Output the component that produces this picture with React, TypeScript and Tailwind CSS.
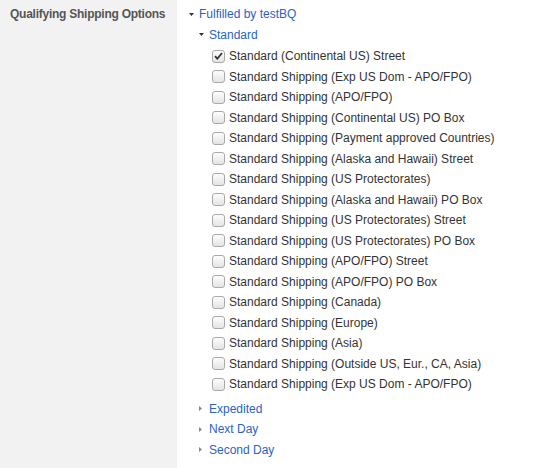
const standardOptions = [
  { label: 'Standard (Continental US) Street', checked: true },
  { label: 'Standard Shipping (Exp US Dom - APO/FPO)' },
  { label: 'Standard Shipping (APO/FPO)' },
  { label: 'Standard Shipping (Continental US) PO Box' },
  { label: 'Standard Shipping (Payment approved Countries)' },
  { label: 'Standard Shipping (Alaska and Hawaii) Street' },
  { label: 'Standard Shipping (US Protectorates)' },
  { label: 'Standard Shipping (Alaska and Hawaii) PO Box' },
  { label: 'Standard Shipping (US Protectorates) Street' },
  { label: 'Standard Shipping (US Protectorates) PO Box' },
  { label: 'Standard Shipping (APO/FPO) Street' },
  { label: 'Standard Shipping (APO/FPO) PO Box' },
  { label: 'Standard Shipping (Canada)' },
  { label: 'Standard Shipping (Europe)' },
  { label: 'Standard Shipping (Asia)' },
  { label: 'Standard Shipping (Outside US, Eur., CA, Asia)' },
  { label: 'Standard Shipping (Exp US Dom - APO/FPO)' },
];

const collapsed = ['Expedited', 'Next Day', 'Second Day'];

const CaretDown = () => (
  <svg width="5" height="3" viewBox="0 0 5 3" className="shrink-0">
    <path d="M0 0h5L2.5 3z" fill="#333" />
  </svg>
);

const CaretRight = () => (
  <svg width="3" height="5" viewBox="0 0 3 5" className="shrink-0">
    <path d="M0 0v5l3-2.5z" fill="#888" />
  </svg>
);

const Checkbox = ({ checked }: { checked?: boolean }) => (
  <span className="w-[13px] h-[13px] shrink-0 rounded-[3px] border border-[#a9a9a9] bg-gradient-to-b from-[#fdfdfd] to-[#e4e4e4] flex items-center justify-center">
    {checked && (
      <svg width="9" height="8" viewBox="0 0 9 8">
        <path d="M1 4.2l2.3 2.5L8 1" fill="none" stroke="#333" strokeWidth="1.8" />
      </svg>
    )}
  </span>
);

export default function App() {
  return (
    <div className="flex w-[547px] h-[468px] bg-white text-[12px] text-[#333] leading-[20.5px] font-['Liberation_Sans',Arial,sans-serif]">
      <div className="w-[177px] shrink-0 bg-[#f2f2f2] pl-[10px] pt-[4px]">
        <span className="font-bold text-[#555] tracking-[-0.25px]">Qualifying Shipping Options</span>
      </div>
      <div className="pt-[4px] pl-[12px]">
        <div className="flex items-center gap-[5px]">
          <CaretDown />
          <span className="text-[#2a62c9]">Fulfilled by testBQ</span>
        </div>
        <div className="pl-[10px]">
          <div className="flex items-center gap-[5px]">
            <CaretDown />
            <span className="text-[#2a62c9]">Standard</span>
          </div>
          <div className="pl-[13px] pt-[1px]">
            {standardOptions.map((o, i) => (
              <div key={i} className="flex items-center gap-[4px]">
                <Checkbox checked={o.checked} />
                <span>{o.label}</span>
              </div>
            ))}
          </div>
          <div className="pt-[4px]">
            {collapsed.map((c) => (
              <div key={c} className="flex items-center gap-[7px]">
                <CaretRight />
                <span className="text-[#2a62c9]">{c}</span>
              </div>
            ))}
          </div>
        </div>
      </div>
    </div>
  );
}
